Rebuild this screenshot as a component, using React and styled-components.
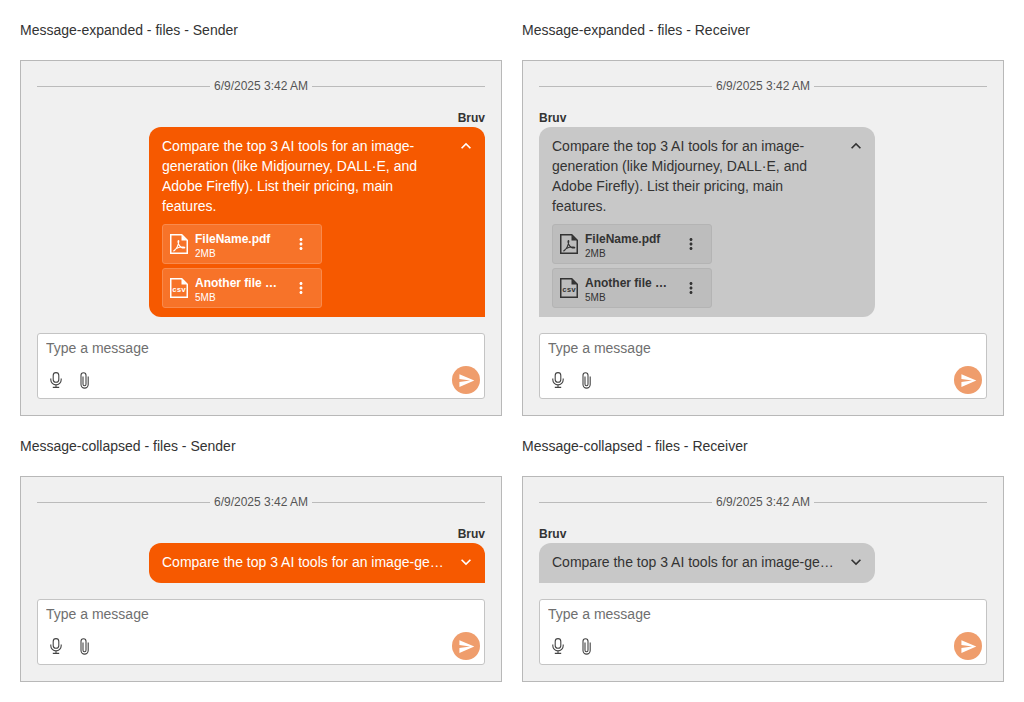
import React from 'react';
import styled, { createGlobalStyle } from 'styled-components';
import { MdMoreVert, MdKeyboardArrowUp, MdKeyboardArrowDown, MdSend } from 'react-icons/md';

const GlobalStyle = createGlobalStyle`
  body {
    margin: 0;
    background: #fff;
    font-family: "Liberation Sans", Arial, sans-serif;
  }
`;

const Page = styled.div`
  display: grid;
  grid-template-columns: 482px 482px;
  gap: 20px;
  padding: 20px;
  align-items: start;
`;

const Story = styled.section`
  display: flex;
  flex-direction: column;
  gap: 20px;
`;

const Title = styled.div`
  font-size: 14px;
  line-height: 20px;
  color: #333;
`;

const Panel = styled.div`
  display: flex;
  flex-direction: column;
  padding: 16px;
  background: #f0f0f0;
  border: 1px solid #b8b8b8;
`;

const DateRow = styled.div`
  display: flex;
  align-items: center;
  gap: 4px;
  height: 18px;
  margin-bottom: 15px;
  font-size: 12px;
  color: #555;

  &::before,
  &::after {
    content: '';
    flex: 1;
    height: 1px;
    background: #bbb;
  }
`;

const Message = styled.div`
  display: flex;
  flex-direction: column;
  align-items: ${(p) => (p.$sender ? 'flex-end' : 'flex-start')};
  margin-bottom: 16px;
`;

const Name = styled.div`
  font-size: 12px;
  font-weight: 700;
  line-height: 17px;
  color: #333;
`;

const Bubble = styled.div`
  width: 336px;
  box-sizing: border-box;
  padding: 9px 9px 9px 13px;
  background: ${(p) => (p.$sender ? '#f65900' : '#c8c8c8')};
  color: ${(p) => (p.$sender ? '#fff' : '#333')};
  border-radius: ${(p) => (p.$sender ? '12px 12px 0 12px' : '12px 12px 12px 0')};
`;

const BubbleHead = styled.div`
  display: flex;
  align-items: flex-start;
  justify-content: space-between;
`;

const BubbleText = styled.div`
  width: 283px;
  font-size: 14px;
  line-height: 20px;
  ${(p) =>
    p.$collapsed &&
    `
    white-space: nowrap;
    overflow: hidden;
    text-overflow: ellipsis;
    padding-bottom: 2px;
  `}
`;

const Toggle = styled.span`
  display: flex;
  width: 20px;
  height: 20px;
  align-items: center;
  justify-content: center;
  font-size: 20px;
`;

const Files = styled.div`
  display: flex;
  flex-direction: column;
  gap: 4px;
  margin-top: 8px;
`;

const FileTile = styled.div`
  display: flex;
  align-items: center;
  width: 160px;
  height: 40px;
  box-sizing: border-box;
  padding: 0 11px 0 7px;
  border-radius: 3px;
  background: ${(p) => (p.$sender ? '#f77329' : '#bdbdbd')};
  border: 1px solid ${(p) => (p.$sender ? '#f98a4c' : '#b4b4b4')};
`;

const FileMeta = styled.div`
  flex: 1;
  min-width: 0;
  margin-left: 7px;
  padding-top: 4px;
`;

const FileName = styled.div`
  width: 84px;
  font-size: 12px;
  font-weight: 700;
  line-height: 15px;
  white-space: nowrap;
  overflow: hidden;
  text-overflow: ellipsis;
`;

const FileSize = styled.div`
  font-size: 10px;
  line-height: 13px;
`;

const Kebab = styled.span`
  display: flex;
  margin-top: -1px;
  font-size: 18px;
`;

const Composer = styled.div`
  display: flex;
  flex-direction: column;
  height: 66px;
  box-sizing: border-box;
  padding: 0 4px 4px 8px;
  background: #fff;
  border: 1px solid #c4c4c4;
  border-radius: 3px;
`;

const Input = styled.input`
  flex: 1;
  min-height: 0;
  width: 100%;
  padding: 0 0 4px;
  border: 0;
  outline: 0;
  background: transparent;
  font: 14px "Liberation Sans", Arial, sans-serif;
  color: #333;

  &::placeholder {
    color: #6f6f6f;
    opacity: 1;
  }
`;

const Tools = styled.div`
  display: flex;
  align-items: center;
  margin-left: -4px;
`;

const Tool = styled.span`
  display: flex;
  width: 28px;
  height: 28px;
  align-items: center;
  justify-content: center;
  color: #444;
`;

const Send = styled.span`
  display: flex;
  width: 28px;
  height: 28px;
  margin-left: auto;
  align-items: center;
  justify-content: center;
  border-radius: 50%;
  background: #ef9d6c;
  color: #fff;
  font-size: 17px;
`;

const MicIcon = () => (
  <svg width="12" height="16" viewBox="0 0 12 16" fill="none" stroke="currentColor" strokeWidth="1.1">
    <rect x="3.2" y="0.6" width="5.6" height="9.6" rx="2.8" />
    <path d="M.8 6.500v1.200a5.200 5.200 0 0 0 10.400 0V6.500M6 12.900v2.500M2.800 15.400h6.400" />
  </svg>
);

const ClipIcon = () => (
  <svg width="9" height="17" viewBox="0 0 9 17" fill="none" stroke="currentColor" strokeWidth="1.1">
    <path d="M3 4.500v7.800a1.500 1.500 0 0 0 3 0V3.200a2.500 2.500 0 0 0-5 0v9.300a3.600 3.600 0 0 0 7.200 0V4.500" />
  </svg>
);

const FileOutline = () => (
  <>
    <path d="M.75.75h11l5.500 5.500v13h-16.500z" fill="none" stroke="currentColor" strokeWidth="1.500" />
    <path d="M11.500 1v5.500H17z" fill="currentColor" />
  </>
);

const PdfIcon = () => (
  <svg width="18" height="20" viewBox="0 0 18 20">
    <FileOutline />
    <path
      d="M3.500 17.200c2.200-1.500 4.800-5.700 5.300-9.700.1-1-.7-1.200-.8-.2-.2 2 1.600 5 3.500 6.200 1.200.7 3.300.8 3.300 0 0-.7-2.700-.7-5.500-.2-2.300.5-4.300 2-5.800 3.900z"
      fill="none"
      stroke="currentColor"
      strokeWidth="1.100"
    />
  </svg>
);

const CsvIcon = () => (
  <svg width="18" height="20" viewBox="0 0 18 20">
    <FileOutline />
    <text x="9" y="13.500" textAnchor="middle" fontSize="7.500" fontWeight="700" fontFamily="'Liberation Mono', monospace" fill="currentColor">
      csv
    </text>
  </svg>
);

const files = [
  { name: 'FileName.pdf', size: '2MB', Icon: PdfIcon },
  { name: 'Another file name.csv', size: '5MB', Icon: CsvIcon },
];

const TEXT =
  'Compare the top 3 AI tools for an image-generation (like Midjourney, DALL·E, and Adobe Firefly). List their pricing, main features.';

const Card = ({ title, sender, collapsed }) => (
  <Story>
    <Title>{title}</Title>
    <Panel>
      <DateRow>6/9/2025 3:42 AM</DateRow>
      <Message $sender={sender}>
        <Name>Bruv</Name>
        <Bubble $sender={sender}>
          <BubbleHead>
            <BubbleText $collapsed={collapsed}>{TEXT}</BubbleText>
            <Toggle>{collapsed ? <MdKeyboardArrowDown /> : <MdKeyboardArrowUp />}</Toggle>
          </BubbleHead>
          {!collapsed && (
            <Files>
              {files.map(({ name, size, Icon }) => (
                <FileTile key={name} $sender={sender}>
                  <Icon />
                  <FileMeta>
                    <FileName>{name}</FileName>
                    <FileSize>{size}</FileSize>
                  </FileMeta>
                  <Kebab>
                    <MdMoreVert />
                  </Kebab>
                </FileTile>
              ))}
            </Files>
          )}
        </Bubble>
      </Message>
      <Composer>
        <Input placeholder="Type a message" />
        <Tools>
          <Tool>
            <MicIcon />
          </Tool>
          <Tool>
            <ClipIcon />
          </Tool>
          <Send>
            <MdSend />
          </Send>
        </Tools>
      </Composer>
    </Panel>
  </Story>
);

const App = () => (
  <>
    <GlobalStyle />
    <Page>
      <Card title="Message-expanded - files - Sender" sender />
      <Card title="Message-expanded - files - Receiver" />
      <Card title="Message-collapsed - files - Sender" sender collapsed />
      <Card title="Message-collapsed - files - Receiver" collapsed />
    </Page>
  </>
);

export default App;
